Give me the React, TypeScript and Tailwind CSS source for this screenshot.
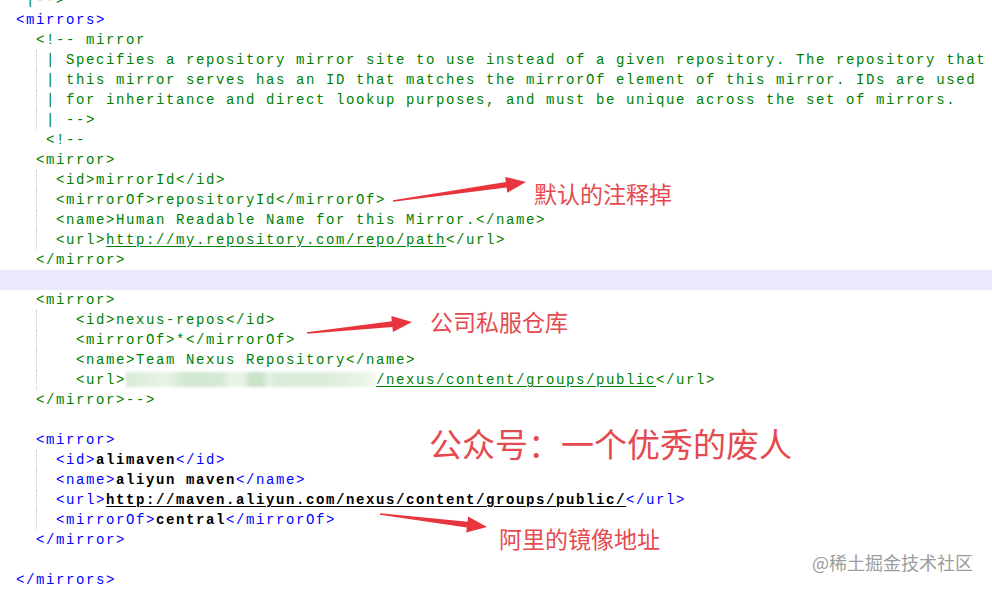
import React from 'react';

type Seg = { t: string; c?: 'g' | 'b' | 'k'; bold?: boolean; u?: boolean; blur?: boolean };
type Line = { segs: Seg[]; guide?: boolean; hl?: boolean };

const g = (t: string, u = false): Seg => ({ t, c: 'g', u });
const b = (t: string): Seg => ({ t, c: 'b' });
const k = (t: string, u = false): Seg => ({ t, c: 'k', bold: true, u });

const lines: Line[] = [
  { segs: [g('  |-->')] },
  { segs: [b(' <mirrors>')] },
  { segs: [g('   <!-- mirror')] },
  { segs: [g('    | Specifies a repository mirror site to use instead of a given repository. The repository that')], guide: true },
  { segs: [g('    | this mirror serves has an ID that matches the mirrorOf element of this mirror. IDs are used')], guide: true },
  { segs: [g('    | for inheritance and direct lookup purposes, and must be unique across the set of mirrors.')], guide: true },
  { segs: [g('    | -->')], guide: true },
  { segs: [g('    <!--')] },
  { segs: [g('   <mirror>')] },
  { segs: [g('     <id>mirrorId</id>')], guide: true },
  { segs: [g('     <mirrorOf>repositoryId</mirrorOf>')], guide: true },
  { segs: [g('     <name>Human Readable Name for this Mirror.</name>')], guide: true },
  { segs: [g('     <url>'), g('http://my.repository.com/repo/path', true), g('</url>')], guide: true },
  { segs: [g('   </mirror>')] },
  { segs: [], hl: true },
  { segs: [g('   <mirror>')] },
  { segs: [g('       <id>nexus-repos</id>')], guide: true },
  { segs: [g('       <mirrorOf>*</mirrorOf>')], guide: true },
  { segs: [g('       <name>Team Nexus Repository</name>')], guide: true },
  { segs: [g('       <url>'), { t: '', blur: true }, g('/nexus/content/groups/public', true), g('</url>')], guide: true },
  { segs: [g('   </mirror>-->')] },
  { segs: [] },
  { segs: [b('   <mirror>')] },
  { segs: [b('     <id>'), k('alimaven'), b('</id>')], guide: true },
  { segs: [b('     <name>'), k('aliyun maven'), b('</name>')], guide: true },
  { segs: [b('     <url>'), k('http://maven.aliyun.com/nexus/content/groups/public/', true), b('</url>')], guide: true },
  { segs: [b('     <mirrorOf>'), k('central'), b('</mirrorOf>')], guide: true },
  { segs: [b('   </mirror>')] },
  { segs: [] },
  { segs: [b(' </mirrors>')] },
  { segs: [] },
];

const colorClass = (s: Seg) =>
  s.c === 'g' ? 'text-[#008000]' : s.c === 'b' ? 'text-[#0000ff]' : 'text-black';

// tapered arrow polygon from tail to tip
const arrowPoints = (tx: number, ty: number, px: number, py: number, head = 20, wing = 8) => {
  const dx = px - tx;
  const dy = py - ty;
  const len = Math.hypot(dx, dy);
  const ux = dx / len;
  const uy = dy / len;
  const nx = -uy;
  const ny = ux;
  const bx = px - ux * head;
  const by = py - uy * head;
  const pts = [
    [tx + nx * 0.7, ty + ny * 0.7],
    [bx + nx * 2.8, by + ny * 2.8],
    [bx + nx * wing, by + ny * wing],
    [px, py],
    [bx - nx * wing, by - ny * wing],
    [bx - nx * 2.8, by - ny * 2.8],
    [tx - nx * 0.7, ty - ny * 0.7],
  ];
  return pts.map((p) => `${p[0].toFixed(1)},${p[1].toFixed(1)}`).join(' ');
};

const Blurred = () => (
  <span className="inline-block w-[250px] h-[15px] align-[-3px] blur-[1.5px] bg-[linear-gradient(to_right,#d6ebd6_0px,#e9f4e9_40px,#cfe7cf_60px,#d4e9d4_95px,#e9f4e9_105px,#e6f2e6_118px,#c7e2c7_125px,#c9e3c9_136px,#e6f2e6_142px,#d9ecd9_150px,#dcedd9_200px,#e4f1e4_225px,#f2f8f2_250px)]" />
);

const App: React.FC = () => {
  return (
    <div className="relative w-[992px] h-[591px] overflow-hidden bg-white">
      <div className="-mt-[10px] pl-[6px] font-['Liberation_Mono',monospace] text-[14px] tracking-[1.6px] leading-[20px]">
        {lines.map((line, i) => (
          <div
            key={i}
            className={`relative h-[20px] -ml-[6px] pl-[6px] whitespace-pre ${line.hl ? 'bg-[#e9e9fb]' : ''}`}
          >
            {line.guide && (
              <span className="absolute left-[36px] top-0 h-full border-l border-dotted border-[#c8c8c8]" />
            )}
            {line.segs.map((s, j) =>
              s.blur ? (
                <Blurred key={j} />
              ) : (
                <span
                  key={j}
                  className={`${colorClass(s)} ${s.bold ? 'font-bold' : ''} ${s.u ? 'underline underline-offset-2' : ''}`}
                >
                  {s.t}
                </span>
              )
            )}
          </div>
        ))}
      </div>

      {/* annotations */}
      <svg className="absolute inset-0" width="992" height="591" viewBox="0 0 992 591">
        <polygon points={arrowPoints(393, 201, 526, 182)} fill="#e8353d" />
        <polygon points={arrowPoints(307, 333, 412, 322)} fill="#e8353d" />
        <polygon points={arrowPoints(380, 514, 487, 527)} fill="#e8353d" />
      </svg>

      <div className="absolute left-[534px] top-[179px] text-[23px] leading-[28px] text-[#e54a50] font-['Noto_Sans_CJK_SC',sans-serif]">
        默认的注释掉
      </div>
      <div className="absolute left-[430px] top-[307px] text-[23px] leading-[28px] text-[#e54a50] font-['Noto_Sans_CJK_SC',sans-serif]">
        公司私服仓库
      </div>
      <div className="absolute left-[429px] top-[423px] text-[33px] leading-[40px] text-[#e54a50] font-['Noto_Sans_CJK_SC',sans-serif]">
        公众号：一个优秀的废人
      </div>
      <div className="absolute left-[499px] top-[524px] text-[23px] leading-[28px] text-[#e54a50] font-['Noto_Sans_CJK_SC',sans-serif]">
        阿里的镜像地址
      </div>
      <div className="absolute left-[812px] top-[550px] text-[18px] leading-[24px] text-[#9c9c9c] font-['Noto_Sans_CJK_SC',sans-serif] [text-shadow:0_0_2px_#fff]">
        @稀土掘金技术社区
      </div>
    </div>
  );
};

export default App;
